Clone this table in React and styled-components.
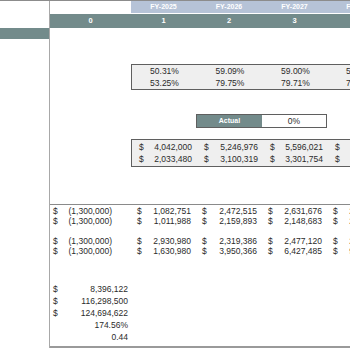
import React from "react";
import styled, { createGlobalStyle } from "styled-components";

const TEAL = "#738b8b";
const BLUE = "#b6c3d7";
const TEXT = "#2b2b2b";
const COLS = "81px 65px 66px 65px 65px";
const BOX_COLS = "65px 66px 65px 65px";

const GlobalStyle = createGlobalStyle`
  html, body { margin: 0; padding: 0; background: #ffffff; }
  body { font-family: "Liberation Sans", Arial, sans-serif; color: ${TEXT}; }
`;

const Sheet = styled.div`
  width: 350px;
  height: 348px;
  display: flex;
  border-top: 1px solid #8c8c8c;
  box-sizing: border-box;
  overflow: hidden;
`;

const LeftPane = styled.div`
  width: 49px;
  flex: none;
  border-right: 1px solid #a8a8a8;
  display: flex;
  flex-direction: column;
`;

const LeftSpacer = styled.div`
  height: 27px;
`;

const LeftBand = styled.div`
  height: 11px;
  background: ${TEAL};
`;

const RightPane = styled.div`
  flex: 1;
  min-width: 0;
  display: flex;
  flex-direction: column;
  overflow: hidden;
  border-bottom: 2px solid #9a9a9a;
`;

const HeaderRow = styled.div`
  display: grid;
  grid-template-columns: ${COLS};
  height: 12px;
  margin-bottom: 1px;
`;

const HeaderCell = styled.div`
  background: ${(p) => (p.$blank ? "#ffffff" : BLUE)};
  color: #ffffff;
  font-weight: bold;
  font-size: 7px;
  line-height: 12px;
  text-align: center;
  white-space: nowrap;
`;

const IndexRow = styled.div`
  display: grid;
  grid-template-columns: ${COLS};
  height: 14px;
  background: ${TEAL};
`;

const IndexCell = styled.div`
  color: #ffffff;
  font-weight: bold;
  font-size: 7.5px;
  line-height: 14px;
  text-align: center;
`;

const Box = styled.div`
  margin-top: ${(p) => p.$top}px;
  margin-left: 81px;
  width: 261px;
  border: 1px solid #5f5f5f;
  background: #efefef;
  padding: ${(p) => p.$pad || 0}px 0;
  flex: none;
`;

const BoxRow = styled.div`
  display: grid;
  grid-template-columns: ${BOX_COLS};
  height: 12px;
`;

const PctCell = styled.div`
  font-size: 8.5px;
  line-height: 12px;
  text-align: center;
  white-space: nowrap;
`;

const MoneyCell = styled.div`
  display: flex;
  justify-content: space-between;
  font-size: 8.5px;
  line-height: ${(p) => p.$lh ?? 12}px;
  white-space: nowrap;
  padding: 0 ${(p) => p.$pr ?? 5}px 0 ${(p) => p.$pl ?? 7}px;
`;

const ActualBox = styled.div`
  margin-top: 24px;
  margin-left: 146px;
  width: 129px;
  height: 12px;
  border: 1px solid #5f5f5f;
  display: grid;
  grid-template-columns: 65px 64px;
  flex: none;
`;

const ActualLabel = styled.div`
  background: ${TEAL};
  color: #ffffff;
  font-weight: bold;
  font-size: 7px;
  line-height: 12px;
  text-align: center;
`;

const ActualValue = styled.div`
  background: #ffffff;
  font-size: 8.5px;
  line-height: 12px;
  text-align: center;
`;

const Rule = styled.div`
  margin-top: 37px;
  height: 1px;
  background: #8a8a8a;
  flex: none;
`;

const Section = styled.div`
  margin-top: ${(p) => p.$top}px;
  display: flex;
  flex-direction: column;
`;

const DataRow = styled.div`
  display: grid;
  grid-template-columns: ${COLS};
  height: ${(p) => p.$h}px;
`;

const topPct = [
  ["50.31%", "59.09%", "59.00%", "59.00%"],
  ["53.25%", "79.75%", "79.71%", "79.71%"],
];

const topMoney = [
  ["4,042,000", "5,246,976", "5,596,021", "5,945,066"],
  ["2,033,480", "3,100,319", "3,301,754", "3,503,189"],
];

const cashRows = [
  ["(1,300,000)", "1,082,751", "2,472,515", "2,631,676", "2,790,837"],
  ["(1,300,000)", "1,011,988", "2,159,893", "2,148,683", "2,137,473"],
  null,
  ["(1,300,000)", "2,930,980", "2,319,386", "2,477,120", "2,634,854"],
  ["(1,300,000)", "1,630,980", "3,950,366", "6,427,485", "9,062,339"],
];

const summary = [
  ["$", "8,396,122"],
  ["$", "116,298,500"],
  ["$", "124,694,622"],
  ["", "174.56%"],
  ["", "0.44"],
];

export default function App() {
  return (
    <>
      <GlobalStyle />
      <Sheet>
        <LeftPane>
          <LeftSpacer />
          <LeftBand />
        </LeftPane>
        <RightPane>
          <HeaderRow>
            <HeaderCell $blank />
            <HeaderCell>FY-2025</HeaderCell>
            <HeaderCell>FY-2026</HeaderCell>
            <HeaderCell>FY-2027</HeaderCell>
            <HeaderCell>FY-2028</HeaderCell>
          </HeaderRow>
          <IndexRow>
            {[0, 1, 2, 3, 4].map((n) => (
              <IndexCell key={n}>{n}</IndexCell>
            ))}
          </IndexRow>

          <Box $top={36}>
            {topPct.map((row, i) => (
              <BoxRow key={i}>
                {row.map((v, j) => (
                  <PctCell key={j}>{v}</PctCell>
                ))}
              </BoxRow>
            ))}
          </Box>

          <ActualBox>
            <ActualLabel>Actual</ActualLabel>
            <ActualValue>0%</ActualValue>
          </ActualBox>

          <Box $top={11} $pad={1}>
            {topMoney.map((row, i) => (
              <BoxRow key={i}>
                {row.map((v, j) => (
                  <MoneyCell key={j}>
                    <span>$</span>
                    <span>{v}</span>
                  </MoneyCell>
                ))}
              </BoxRow>
            ))}
          </Box>

          <Rule />

          <Section $top={1}>
            {cashRows.map((row, i) =>
              row ? (
                <DataRow key={i} $h={10}>
                  {row.map((v, j) => (
                    <MoneyCell
                      key={j}
                      $lh={10}
                      $pl={j === 0 ? 3 : 6}
                      $pr={j === 0 ? 19 : 5}
                    >
                      <span>$</span>
                      <span>{v}</span>
                    </MoneyCell>
                  ))}
                </DataRow>
              ) : (
                <DataRow key={i} $h={10} />
              )
            )}
          </Section>

          <Section $top={27}>
            {summary.map(([sym, v], i) => (
              <DataRow key={i} $h={12}>
                <MoneyCell $pl={3} $pr={3}>
                  <span>{sym}</span>
                  <span>{v}</span>
                </MoneyCell>
              </DataRow>
            ))}
          </Section>
        </RightPane>
      </Sheet>
    </>
  );
}
